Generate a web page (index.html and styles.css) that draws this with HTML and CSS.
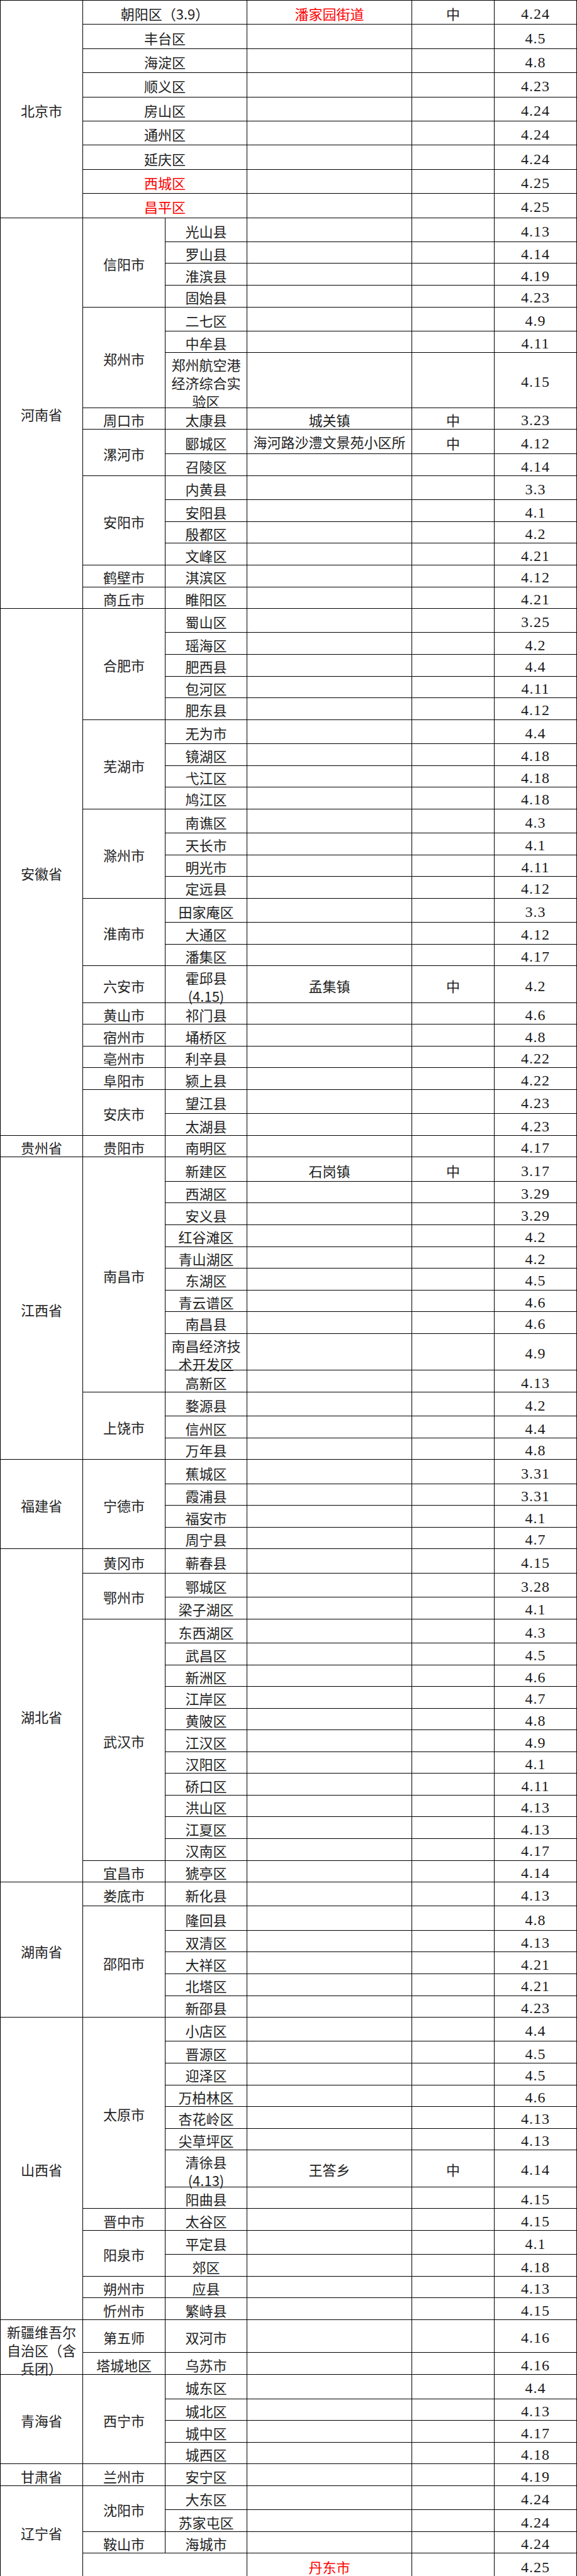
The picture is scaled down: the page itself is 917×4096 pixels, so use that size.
FILE: index.html
```html
<!DOCTYPE html>
<html lang="zh-CN">
<head>
<meta charset="utf-8">
<title>名单</title>
<link rel="stylesheet" href="styles.css">
</head>
<body>
<table class="sheet">
<colgroup><col class="c1"><col class="c2"><col class="c3"><col class="c4"><col class="c5"><col class="c6"></colgroup>
<tbody>
<tr class="h40"><td rowspan="9">北京市</td><td colspan="2">朝阳区（3.9）</td><td class="red">潘家园街道</td><td>中</td><td class="d">4.24</td></tr>
<tr class="h40"><td colspan="2">丰台区</td><td></td><td></td><td class="d">4.5</td></tr>
<tr class="h40"><td colspan="2">海淀区</td><td></td><td></td><td class="d">4.8</td></tr>
<tr class="h40"><td colspan="2">顺义区</td><td></td><td></td><td class="d">4.23</td></tr>
<tr class="h40"><td colspan="2">房山区</td><td></td><td></td><td class="d">4.24</td></tr>
<tr class="h40"><td colspan="2">通州区</td><td></td><td></td><td class="d">4.24</td></tr>
<tr class="h40"><td colspan="2">延庆区</td><td></td><td></td><td class="d">4.24</td></tr>
<tr class="h40"><td colspan="2" class="red">西城区</td><td></td><td></td><td class="d">4.25</td></tr>
<tr class="h40"><td colspan="2" class="red">昌平区</td><td></td><td></td><td class="d">4.25</td></tr>

<tr class="h40"><td rowspan="16">河南省</td><td rowspan="4">信阳市</td><td>光山县</td><td></td><td></td><td class="d">4.13</td></tr>
<tr class="h36"><td>罗山县</td><td></td><td></td><td class="d">4.14</td></tr>
<tr class="h36"><td>淮滨县</td><td></td><td></td><td class="d">4.19</td></tr>
<tr class="h36"><td>固始县</td><td></td><td></td><td class="d">4.23</td></tr>
<tr class="h40"><td rowspan="3">郑州市</td><td>二七区</td><td></td><td></td><td class="d">4.9</td></tr>
<tr class="h36"><td>中牟县</td><td></td><td></td><td class="d">4.11</td></tr>
<tr class="h90"><td><span class="ml">郑州航空港经济综合实验区</span></td><td></td><td></td><td class="d">4.15</td></tr>
<tr class="h36"><td>周口市</td><td>太康县</td><td>城关镇</td><td>中</td><td class="d">3.23</td></tr>
<tr class="h40"><td rowspan="2">漯河市</td><td>郾城区</td><td class="clip"><div class="clipbox">海河路沙澧文景苑小区所在街道</div></td><td>中</td><td class="d">4.12</td></tr>
<tr class="h36"><td>召陵区</td><td></td><td></td><td class="d">4.14</td></tr>
<tr class="h40"><td rowspan="4">安阳市</td><td>内黄县</td><td></td><td></td><td class="d">3.3</td></tr>
<tr class="h36"><td>安阳县</td><td></td><td></td><td class="d">4.1</td></tr>
<tr class="h36"><td>殷都区</td><td></td><td></td><td class="d">4.2</td></tr>
<tr class="h36"><td>文峰区</td><td></td><td></td><td class="d">4.21</td></tr>
<tr class="h36"><td>鹤壁市</td><td>淇滨区</td><td></td><td></td><td class="d">4.12</td></tr>
<tr class="h36"><td>商丘市</td><td>睢阳区</td><td></td><td></td><td class="d">4.21</td></tr>

<tr class="h40"><td rowspan="23">安徽省</td><td rowspan="5">合肥市</td><td>蜀山区</td><td></td><td></td><td class="d">3.25</td></tr>
<tr class="h36"><td>瑶海区</td><td></td><td></td><td class="d">4.2</td></tr>
<tr class="h36"><td>肥西县</td><td></td><td></td><td class="d">4.4</td></tr>
<tr class="h36"><td>包河区</td><td></td><td></td><td class="d">4.11</td></tr>
<tr class="h36"><td>肥东县</td><td></td><td></td><td class="d">4.12</td></tr>
<tr class="h40"><td rowspan="4">芜湖市</td><td>无为市</td><td></td><td></td><td class="d">4.4</td></tr>
<tr class="h36"><td>镜湖区</td><td></td><td></td><td class="d">4.18</td></tr>
<tr class="h36"><td>弋江区</td><td></td><td></td><td class="d">4.18</td></tr>
<tr class="h36"><td>鸠江区</td><td></td><td></td><td class="d">4.18</td></tr>
<tr class="h40"><td rowspan="4">滁州市</td><td>南谯区</td><td></td><td></td><td class="d">4.3</td></tr>
<tr class="h36"><td>天长市</td><td></td><td></td><td class="d">4.1</td></tr>
<tr class="h36"><td>明光市</td><td></td><td></td><td class="d">4.11</td></tr>
<tr class="h36"><td>定远县</td><td></td><td></td><td class="d">4.12</td></tr>
<tr class="h40"><td rowspan="3">淮南市</td><td>田家庵区</td><td></td><td></td><td class="d">3.3</td></tr>
<tr class="h36"><td>大通区</td><td></td><td></td><td class="d">4.12</td></tr>
<tr class="h36"><td>潘集区</td><td></td><td></td><td class="d">4.17</td></tr>
<tr class="h60"><td>六安市</td><td><span class="ml">霍邱县<br>(4.15)</span></td><td>孟集镇</td><td>中</td><td class="d">4.2</td></tr>
<tr class="h36"><td>黄山市</td><td>祁门县</td><td></td><td></td><td class="d">4.6</td></tr>
<tr class="h36"><td>宿州市</td><td>埇桥区</td><td></td><td></td><td class="d">4.8</td></tr>
<tr class="h36"><td>亳州市</td><td>利辛县</td><td></td><td></td><td class="d">4.22</td></tr>
<tr class="h36"><td>阜阳市</td><td>颍上县</td><td></td><td></td><td class="d">4.22</td></tr>
<tr class="h40"><td rowspan="2">安庆市</td><td>望江县</td><td></td><td></td><td class="d">4.23</td></tr>
<tr class="h36"><td>太湖县</td><td></td><td></td><td class="d">4.23</td></tr>

<tr class="h36"><td>贵州省</td><td>贵阳市</td><td>南明区</td><td></td><td></td><td class="d">4.17</td></tr>

<tr class="h40"><td rowspan="13">江西省</td><td rowspan="10">南昌市</td><td>新建区</td><td>石岗镇</td><td>中</td><td class="d">3.17</td></tr>
<tr class="h36"><td>西湖区</td><td></td><td></td><td class="d">3.29</td></tr>
<tr class="h36"><td>安义县</td><td></td><td></td><td class="d">3.29</td></tr>
<tr class="h36"><td>红谷滩区</td><td></td><td></td><td class="d">4.2</td></tr>
<tr class="h36"><td>青山湖区</td><td></td><td></td><td class="d">4.2</td></tr>
<tr class="h36"><td>东湖区</td><td></td><td></td><td class="d">4.5</td></tr>
<tr class="h36"><td>青云谱区</td><td></td><td></td><td class="d">4.6</td></tr>
<tr class="h36"><td>南昌县</td><td></td><td></td><td class="d">4.6</td></tr>
<tr class="h60"><td><span class="ml">南昌经济技术开发区</span></td><td></td><td></td><td class="d">4.9</td></tr>
<tr class="h36"><td>高新区</td><td></td><td></td><td class="d">4.13</td></tr>
<tr class="h40"><td rowspan="3">上饶市</td><td>婺源县</td><td></td><td></td><td class="d">4.2</td></tr>
<tr class="h36"><td>信州区</td><td></td><td></td><td class="d">4.4</td></tr>
<tr class="h36"><td>万年县</td><td></td><td></td><td class="d">4.8</td></tr>

<tr class="h40"><td rowspan="4">福建省</td><td rowspan="4">宁德市</td><td>蕉城区</td><td></td><td></td><td class="d">3.31</td></tr>
<tr class="h36"><td>霞浦县</td><td></td><td></td><td class="d">3.31</td></tr>
<tr class="h36"><td>福安市</td><td></td><td></td><td class="d">4.1</td></tr>
<tr class="h36"><td>周宁县</td><td></td><td></td><td class="d">4.7</td></tr>

<tr class="h40"><td rowspan="15">湖北省</td><td>黄冈市</td><td>蕲春县</td><td></td><td></td><td class="d">4.15</td></tr>
<tr class="h40"><td rowspan="2">鄂州市</td><td>鄂城区</td><td></td><td></td><td class="d">3.28</td></tr>
<tr class="h36"><td>梁子湖区</td><td></td><td></td><td class="d">4.1</td></tr>
<tr class="h40"><td rowspan="11">武汉市</td><td>东西湖区</td><td></td><td></td><td class="d">4.3</td></tr>
<tr class="h36"><td>武昌区</td><td></td><td></td><td class="d">4.5</td></tr>
<tr class="h36"><td>新洲区</td><td></td><td></td><td class="d">4.6</td></tr>
<tr class="h36"><td>江岸区</td><td></td><td></td><td class="d">4.7</td></tr>
<tr class="h36"><td>黄陂区</td><td></td><td></td><td class="d">4.8</td></tr>
<tr class="h36"><td>江汉区</td><td></td><td></td><td class="d">4.9</td></tr>
<tr class="h36"><td>汉阳区</td><td></td><td></td><td class="d">4.1</td></tr>
<tr class="h36"><td>硚口区</td><td></td><td></td><td class="d">4.11</td></tr>
<tr class="h36"><td>洪山区</td><td></td><td></td><td class="d">4.13</td></tr>
<tr class="h36"><td>江夏区</td><td></td><td></td><td class="d">4.13</td></tr>
<tr class="h36"><td>汉南区</td><td></td><td></td><td class="d">4.17</td></tr>
<tr class="h36"><td>宜昌市</td><td>猇亭区</td><td></td><td></td><td class="d">4.14</td></tr>

<tr class="h40"><td rowspan="6">湖南省</td><td>娄底市</td><td>新化县</td><td></td><td></td><td class="d">4.13</td></tr>
<tr class="h40"><td rowspan="5">邵阳市</td><td>隆回县</td><td></td><td></td><td class="d">4.8</td></tr>
<tr class="h36"><td>双清区</td><td></td><td></td><td class="d">4.13</td></tr>
<tr class="h36"><td>大祥区</td><td></td><td></td><td class="d">4.21</td></tr>
<tr class="h36"><td>北塔区</td><td></td><td></td><td class="d">4.21</td></tr>
<tr class="h36"><td>新邵县</td><td></td><td></td><td class="d">4.23</td></tr>

<tr class="h40"><td rowspan="13">山西省</td><td rowspan="8">太原市</td><td>小店区</td><td></td><td></td><td class="d">4.4</td></tr>
<tr class="h36"><td>晋源区</td><td></td><td></td><td class="d">4.5</td></tr>
<tr class="h36"><td>迎泽区</td><td></td><td></td><td class="d">4.5</td></tr>
<tr class="h36"><td>万柏林区</td><td></td><td></td><td class="d">4.6</td></tr>
<tr class="h36"><td>杏花岭区</td><td></td><td></td><td class="d">4.13</td></tr>
<tr class="h36"><td>尖草坪区</td><td></td><td></td><td class="d">4.13</td></tr>
<tr class="h60"><td><span class="ml">清徐县<br>(4.13)</span></td><td>王答乡</td><td>中</td><td class="d">4.14</td></tr>
<tr class="h36"><td>阳曲县</td><td></td><td></td><td class="d">4.15</td></tr>
<tr class="h36"><td>晋中市</td><td>太谷区</td><td></td><td></td><td class="d">4.15</td></tr>
<tr class="h40"><td rowspan="2">阳泉市</td><td>平定县</td><td></td><td></td><td class="d">4.1</td></tr>
<tr class="h36"><td>郊区</td><td></td><td></td><td class="d">4.18</td></tr>
<tr class="h36"><td>朔州市</td><td>应县</td><td></td><td></td><td class="d">4.13</td></tr>
<tr class="h36"><td>忻州市</td><td>繁峙县</td><td></td><td></td><td class="d">4.15</td></tr>

<tr class="h54"><td rowspan="2"><span class="ml">新疆维吾尔<br>自治区（含<br>兵团）</span></td><td>第五师</td><td>双河市</td><td></td><td></td><td class="d">4.16</td></tr>
<tr class="h36"><td>塔城地区</td><td>乌苏市</td><td></td><td></td><td class="d">4.16</td></tr>

<tr class="h40"><td rowspan="4">青海省</td><td rowspan="4">西宁市</td><td>城东区</td><td></td><td></td><td class="d">4.4</td></tr>
<tr class="h36"><td>城北区</td><td></td><td></td><td class="d">4.13</td></tr>
<tr class="h36"><td>城中区</td><td></td><td></td><td class="d">4.17</td></tr>
<tr class="h36"><td>城西区</td><td></td><td></td><td class="d">4.18</td></tr>

<tr class="h36"><td>甘肃省</td><td>兰州市</td><td>安宁区</td><td></td><td></td><td class="d">4.19</td></tr>

<tr class="h40"><td rowspan="4">辽宁省</td><td rowspan="2">沈阳市</td><td>大东区</td><td></td><td></td><td class="d">4.24</td></tr>
<tr class="h36"><td>苏家屯区</td><td></td><td></td><td class="d">4.24</td></tr>
<tr class="h36"><td>鞍山市</td><td>海城市</td><td></td><td></td><td class="d">4.24</td></tr>
<tr class="h40"><td colspan="2"></td><td class="red">丹东市</td><td></td><td class="d">4.25</td></tr>
</tbody>
</table>
</body>
</html>
```
FILE: styles.css
```css
html, body {
  margin: 0;
  padding: 0;
  background: #ffffff;
}

body {
  font-family: "Noto Sans CJK SC", "Noto Sans", sans-serif;
  color: #222222;
}

.sheet {
  border-collapse: collapse;
  table-layout: fixed;
  width: 916px;
}

.c1 { width: 131px; }
.c2 { width: 131px; }
.c3 { width: 130px; }
.c4 { width: 262px; }
.c5 { width: 131px; }
.c6 { width: 131px; }

.h36 { height: 34.56px; }
.h40 { height: 38.4px; }
.h54 { height: 51.84px; }
.h60 { height: 57.6px; }
.h90 { height: 86.4px; }

.sheet td {
  border: 1px solid #000000;
  padding: 4px 0 0;
  text-align: center;
  vertical-align: middle;
  font-size: 22px;
  line-height: 27px;
  font-weight: 400;
}

.sheet td.d {
  font-family: "Liberation Serif", serif;
  font-size: 24px;
  letter-spacing: 1px;
  padding-top: 6px;
  color: #1a1a1a;
}

.sheet td.red {
  color: #ff0000;
}

.ml {
  display: block;
  line-height: 28.8px;
  margin-bottom: -4px;
}

.sheet td.clip {
  padding: 0;
  vertical-align: top;
}

.clipbox {
  height: 38px;
  overflow: hidden;
  padding-top: 5px;
  box-sizing: border-box;
  line-height: 28.8px;
}
```
